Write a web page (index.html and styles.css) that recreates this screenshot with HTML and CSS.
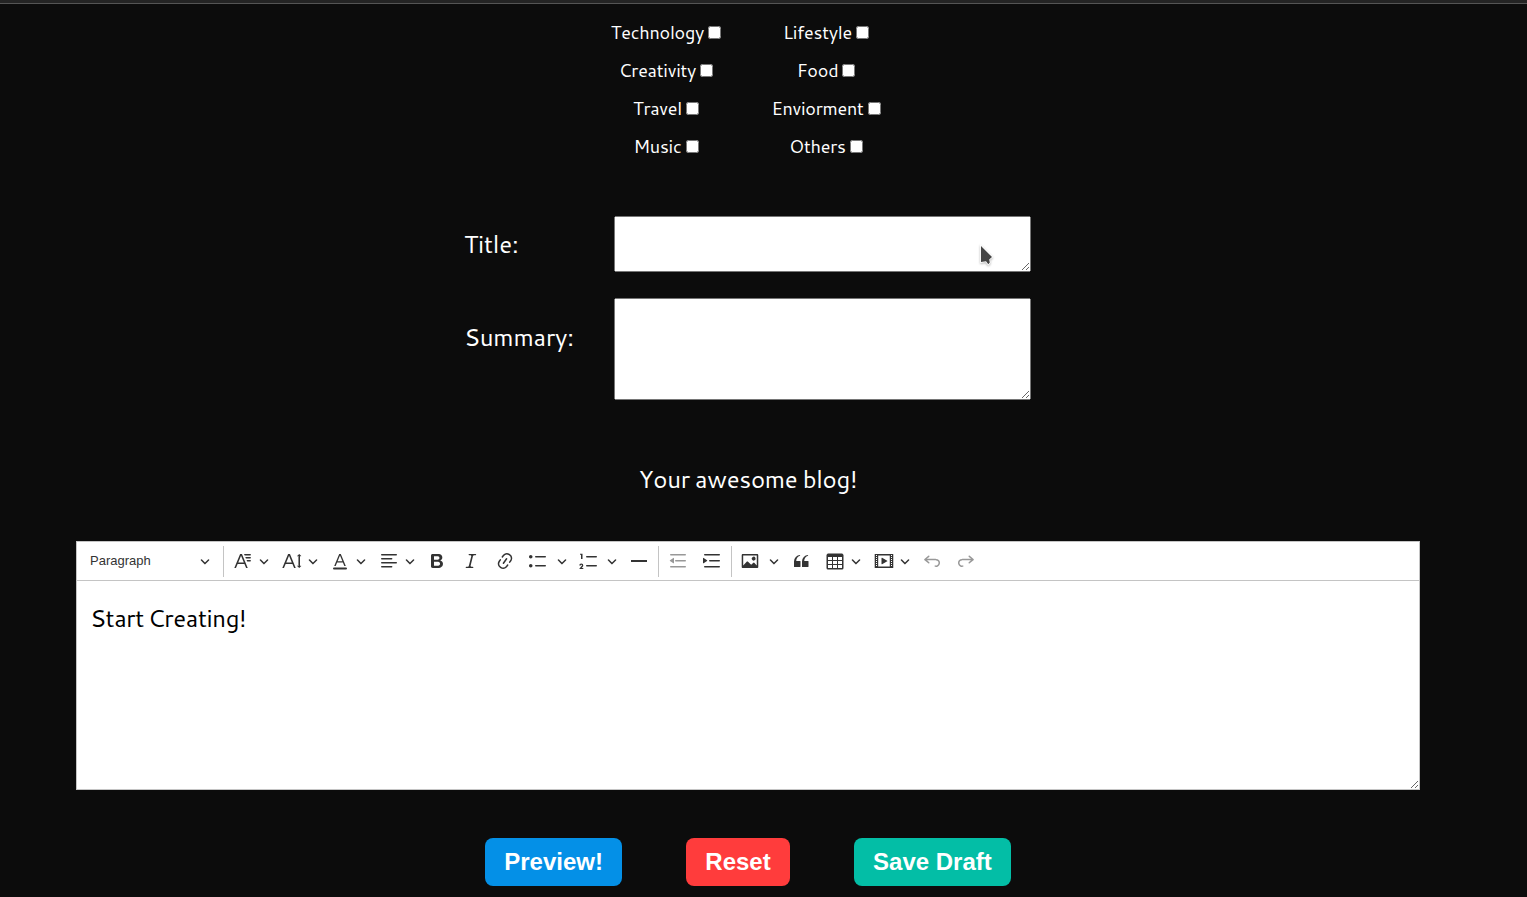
FILE: index.html
```html
<!DOCTYPE html>
<html lang="en">
<head>
<meta charset="utf-8">
<title>Create blog</title>
<link rel="stylesheet" href="styles.css">
</head>
<body>
<svg class="sprite" aria-hidden="true">
  <symbol id="arrow" viewBox="0 0 10 10"><path d="M.941 4.523a.75.75 0 1 1 1.06-1.06l3.006 3.005 3.005-3.005a.75.75 0 1 1 1.06 1.06l-3.549 3.55a.75.75 0 0 1-1.168-.136L.941 4.523z"/></symbol>
</svg>
<div class="topbar"></div>
<main class="page">
  <section class="categories">
    <div class="category-col">
      <label>Technology<input type="checkbox"></label>
      <label>Creativity<input type="checkbox"></label>
      <label>Travel<input type="checkbox"></label>
      <label>Music<input type="checkbox"></label>
    </div>
    <div class="category-col">
      <label>Lifestyle<input type="checkbox"></label>
      <label>Food<input type="checkbox"></label>
      <label>Enviorment<input type="checkbox"></label>
      <label>Others<input type="checkbox"></label>
    </div>
  </section>
  <section class="fields">
    <div class="field title-field">
      <label for="title">Title:</label>
      <textarea id="title"></textarea>
      <svg class="pointer" viewBox="0 0 16 24"><path d="M2 2 V18 L7 17.2 L9.3 20.2 L10.8 18.5 L10.2 15.4 L13 13 Z" fill="#444" stroke="#fff" stroke-width="1.6" paint-order="stroke"/></svg>
    </div>
    <div class="field summary-field">
      <label for="summary">Summary:</label>
      <textarea id="summary"></textarea>
    </div>
  </section>
  <h2 class="heading">Your awesome blog!</h2>
  <section class="editor">
    <div class="toolbar">
      <div class="style-select"><span>Paragraph</span><svg class="arrow"><use href="#arrow"/></svg></div>
      <i class="sep"></i>
      <div class="drop"><svg class="icon" viewBox="0 0 20 20"><path d="M11.03 3h6.149a.75.75 0 1 1 0 1.5h-5.514L11.03 3zm1.27 3h4.879a.75.75 0 1 1 0 1.5h-4.244L12.3 6zm1.27 3h3.609a.75.75 0 1 1 0 1.5h-2.973L13.57 9zm-2.754 2.5L8.038 4.785 5.261 11.5h5.555zm.62 1.5H4.641l-1.666 4.028H1.312l5.789-14h1.875l5.789 14h-1.663L11.436 13z"/></svg><svg class="arrow"><use href="#arrow"/></svg></div>
      <div class="drop"><svg class="icon" viewBox="0 0 20 20"><path d="M9.816 11.5 7.038 4.785 4.261 11.5h5.555zm.62 1.5H3.641l-1.666 4.028H.312l5.789-14h1.875l5.789 14h-1.663L10.436 13zm7.55 2.279.779-.779.53.53-2.079 2.079-2.079-2.079.53-.53.779.779V4.72l-.779.779-.53-.53 2.079-2.079 2.079 2.079-.53.53-.779-.779z"/></svg><svg class="arrow"><use href="#arrow"/></svg></div>
      <div class="drop"><svg class="icon" viewBox="0 0 20 20"><path d="M12.4 10.3 10 4.5l-2.4 5.8h4.8zm.5 1.2H7.1L5.7 15H4.2l5-12h1.6l5 12h-1.5L12.9 11.5zm3.1 7H4a1 1 0 0 1 0-2h12a1 1 0 0 1 0 2z"/></svg><svg class="arrow"><use href="#arrow"/></svg></div>
      <div class="drop"><svg class="icon" viewBox="0 0 20 20"><path class="line" d="M2.75 3.75h14.5M2.75 7.75h9.9M2.75 11.75h14.5M2.75 15.75h9.9"/></svg><svg class="arrow"><use href="#arrow"/></svg></div>
      <div class="tool"><svg class="icon" viewBox="0 0 20 20"><path d="M10.187 17H5.773c-.637 0-1.092-.138-1.364-.415-.273-.277-.409-.718-.409-1.323V4.738c0-.617.14-1.062.419-1.332.279-.27.73-.406 1.354-.406h4.68c.69 0 1.288.041 1.793.124.506.083.96.242 1.36.478.341.197.644.447.906.75a3.262 3.262 0 0 1 .808 2.162c0 1.401-.722 2.426-2.167 3.075C15.05 10.175 16 11.315 16 13.01a3.756 3.756 0 0 1-2.296 3.504 6.1 6.1 0 0 1-1.517.377c-.571.073-1.238.11-2 .11zm-.217-6.217H7v4.087h3.069c1.977 0 2.965-.69 2.965-2.072 0-.707-.256-1.22-.768-1.537-.512-.319-1.277-.478-2.296-.478zM7 5.13v3.619h2.606c.729 0 1.292-.067 1.69-.2a1.6 1.6 0 0 0 .91-.765c.165-.267.247-.566.247-.897 0-.707-.26-1.176-.778-1.409-.519-.232-1.31-.348-2.375-.348H7z"/></svg></div>
      <div class="tool"><svg class="icon" viewBox="0 0 20 20"><path d="m9.586 14.633.021.004c-.036.335.095.655.393.962.082.083.173.15.274.201h1.474a.6.6 0 1 1 0 1.2H5.304a.6.6 0 0 1 0-1.2h1.15c.474-.07.809-.182 1.005-.334.157-.122.291-.32.404-.597l2.416-9.55a1.053 1.053 0 0 0-.281-.823 1.12 1.12 0 0 0-.442-.296H8.15a.6.6 0 0 1 0-1.2h6.443a.6.6 0 1 1 0 1.2h-1.195c-.376.056-.65.155-.823.296-.215.175-.423.439-.623.79l-2.366 9.347z"/></svg></div>
      <div class="tool"><svg class="icon" viewBox="0 0 20 20"><path d="m11.077 15 .991-1.416a.75.75 0 1 1 1.229.86l-1.148 1.64a.748.748 0 0 1-.217.206 5.251 5.251 0 0 1-8.503-5.955.741.741 0 0 1 .12-.274l1.147-1.639a.75.75 0 1 1 1.228.86L4.933 10.7l.006.003a3.75 3.75 0 0 0 6.132 4.294l.006.004zm5.494-5.335a.748.748 0 0 1-.12.274l-1.147 1.639a.75.75 0 1 1-1.228-.86l.86-1.23a3.75 3.75 0 0 0-6.144-4.301l-.86 1.229a.75.75 0 0 1-1.229-.86l1.148-1.64a.748.748 0 0 1 .217-.206 5.251 5.251 0 0 1 8.503 5.955zm-4.563-2.532a.75.75 0 0 1 .184 1.045l-3.155 4.505a.75.75 0 1 1-1.229-.86l3.155-4.506a.75.75 0 0 1 1.045-.184z"/></svg></div>
      <div class="split"><svg class="icon" viewBox="0 0 20 20"><path d="M7 5.75c0 .414.336.75.75.75h9.5a.75.75 0 1 0 0-1.5h-9.5a.75.75 0 0 0-.75.75zm-6 0C1 4.784 1.777 4 2.75 4c.966 0 1.75.777 1.75 1.75 0 .966-.777 1.75-1.75 1.75C1.784 7.5 1 6.723 1 5.75zm6 9c0 .414.336.75.75.75h9.5a.75.75 0 1 0 0-1.5h-9.5a.75.75 0 0 0-.75.75zm-6 0c0-.966.777-1.75 1.75-1.75.966 0 1.75.777 1.75 1.75 0 .966-.777 1.75-1.75 1.75-.966 0-1.75-.777-1.75-1.75z"/></svg><svg class="arrow"><use href="#arrow"/></svg></div>
      <div class="split numbered"><svg class="icon" viewBox="0 0 20 20"><path d="M7 5.75c0 .414.336.75.75.75h9.5a.75.75 0 1 0 0-1.5h-9.5a.75.75 0 0 0-.75.75zM3.5 3v5H2V3.7H1v-1h2.5V3zM.343 17.857l2.59-3.257H2.92a.6.6 0 1 0-1.04 0H.302a2 2 0 1 1 3.995 0h-.001c-.048.405-.16.734-.333.988-.175.254-.59.692-1.244 1.312H4.3v1h-4l.043-.043zM7 14.75a.75.75 0 0 1 .75-.75h9.5a.75.75 0 1 1 0 1.5h-9.5a.75.75 0 0 1-.75-.75z"/></svg><svg class="arrow"><use href="#arrow"/></svg></div>
      <div class="tool"><svg class="icon" viewBox="0 0 20 20"><path d="M2 9h16v2H2z"/></svg></div>
      <i class="sep"></i>
      <div class="tool off"><svg class="icon" viewBox="0 0 20 20"><path d="M2 3.75c0 .414.336.75.75.75h14.5a.75.75 0 1 0 0-1.5H2.75a.75.75 0 0 0-.75.75zm5 6c0 .414.336.75.75.75h9.5a.75.75 0 1 0 0-1.5h-9.5a.75.75 0 0 0-.75.75zM2.75 16.5h14.5a.75.75 0 1 0 0-1.5H2.75a.75.75 0 1 0 0 1.5zM5.368 6.95 1.98 9.358a.4.4 0 0 0 .013.661l3.39 2.207A.4.4 0 0 0 6 11.892V7.275a.4.4 0 0 0-.632-.326z"/></svg></div>
      <div class="tool"><svg class="icon" viewBox="0 0 20 20"><path d="M2 3.75c0 .414.336.75.75.75h14.5a.75.75 0 1 0 0-1.5H2.75a.75.75 0 0 0-.75.75zm5 6c0 .414.336.75.75.75h9.5a.75.75 0 1 0 0-1.5h-9.5a.75.75 0 0 0-.75.75zM2.75 16.5h14.5a.75.75 0 1 0 0-1.5H2.75a.75.75 0 1 0 0 1.5zM1.632 6.95 5.02 9.358a.4.4 0 0 1-.013.661l-3.39 2.207A.4.4 0 0 1 1 11.892V7.275a.4.4 0 0 1 .632-.326z"/></svg></div>
      <i class="sep"></i>
      <div class="split"><svg class="icon" viewBox="0 0 20 20"><path d="M6.91 10.54c.26-.23.64-.21.88.03l3.36 3.14 2.23-2.06a.64.64 0 0 1 .87 0l2.52 2.97V4.5H3.2v10.12l3.71-4.08zm10.27-7.51c.6 0 1.09.47 1.09 1.05v11.84c0 .59-.49 1.06-1.09 1.06H2.79c-.6 0-1.09-.47-1.09-1.06V4.08c0-.58.49-1.05 1.1-1.05h14.38zm-5.22 5.56a1.96 1.96 0 1 1 3.4-1.96 1.96 1.96 0 0 1-3.4 1.96z"/></svg><svg class="arrow"><use href="#arrow"/></svg></div>
      <div class="tool"><svg class="icon" viewBox="0 0 20 20"><path d="M3 10.423a6.5 6.5 0 0 1 6.056-6.408l.038.67C6.448 5.423 5.354 7.663 5.22 10H9c.552 0 .5.432.5.986v4.511c0 .554-.448.503-1 .503h-5c-.552 0-.5-.449-.5-1.003v-4.574zm8 0a6.5 6.5 0 0 1 6.056-6.408l.038.67c-2.646.739-3.74 2.979-3.873 5.315H17c.552 0 .5.432.5.986v4.511c0 .554-.448.503-1 .503h-5c-.552 0-.5-.449-.5-1.003v-4.574z"/></svg></div>
      <div class="drop"><svg class="icon" viewBox="0 0 20 20"><path d="M3 6v3h4V6H3zm0 4v3h4v-3H3zm0 4v3h4v-3H3zm5 3h4v-3H8v3zm5 0h4v-3h-4v3zm4-4v-3h-4v3h4zm0-4V6h-4v3h4zm1.5 8a1.5 1.5 0 0 1-1.5 1.5H3A1.5 1.5 0 0 1 1.5 17V4c.222-.863 1.068-1.5 2-1.5h13c.932 0 1.778.637 2 1.5v13zM12 13v-3H8v3h4zm0-4V6H8v3h4z"/></svg><svg class="arrow"><use href="#arrow"/></svg></div>
      <div class="drop"><svg class="icon" viewBox="0 0 20 20"><path fill-rule="evenodd" d="M18.68 3.03c.6 0 .59-.03.59.55v12.84c0 .59.01.56-.59.56H1.29c-.6 0-.59.03-.59-.56V3.58c0-.58-.01-.55.6-.55h17.38zM15.77 15.4V4.6H4.2v10.8h11.57zM2 4v1h1V4H2zm0 2v1h1V6H2zm0 2v1h1V8H2zm0 2v1h1v-1H2zm0 2v1h1v-1H2zm0 2v1h1v-1H2zM17 4v1h1V4h-1zm0 2v1h1V6h-1zm0 2v1h1V8h-1zm0 2v1h1v-1h-1zm0 2v1h1v-1h-1zm0 2v1h1v-1h-1zM7.5 7.177a.4.4 0 0 1 .593-.351l5.133 2.824a.4.4 0 0 1 0 .7l-5.133 2.824a.4.4 0 0 1-.593-.35V7.176z"/></svg><svg class="arrow"><use href="#arrow"/></svg></div>
      <div class="tool off"><svg class="icon" viewBox="0 0 20 20"><path d="m5.042 9.367 2.189 1.837a.75.75 0 0 1-.965 1.149l-3.788-3.18a.747.747 0 0 1-.21-.284.75.75 0 0 1 .17-.945L6.23 4.762a.75.75 0 1 1 .964 1.15L4.863 7.866h8.917A.75.75 0 0 1 14 7.9a4 4 0 1 1-1.477 7.718l.344-1.489a2.5 2.5 0 1 0 1.094-4.73l.008-.032H5.042z"/></svg></div>
      <div class="tool off"><svg class="icon mirrored" viewBox="0 0 20 20"><path d="m5.042 9.367 2.189 1.837a.75.75 0 0 1-.965 1.149l-3.788-3.18a.747.747 0 0 1-.21-.284.75.75 0 0 1 .17-.945L6.23 4.762a.75.75 0 1 1 .964 1.15L4.863 7.866h8.917A.75.75 0 0 1 14 7.9a4 4 0 1 1-1.477 7.718l.344-1.489a2.5 2.5 0 1 0 1.094-4.73l.008-.032H5.042z"/></svg></div>
    </div>
    <div class="content"><p>Start Creating!</p></div>
  </section>
  <div class="actions">
    <button class="btn preview">Preview!</button>
    <button class="btn reset">Reset</button>
    <button class="btn save">Save Draft</button>
  </div>
</main>
</body>
</html>
```
FILE: styles.css
```css
* { box-sizing: border-box; }
body {
  margin: 0;
  height: 897px;
  overflow: hidden;
  background: #0c0c0c;
  color: #fff;
  font-family: Cantarell, "Noto Sans", sans-serif;
}
.sprite { display: none; }
.topbar { height: 4px; background: #242424; border-bottom: 1px solid #555; }
.page { width: 1496px; display: flex; flex-direction: column; align-items: center; }

.categories { display: grid; grid-template-columns: 160px 160px; margin: 9px 4px 0 0; }
.category-col { display: flex; flex-direction: column; align-items: center; }
.category-col label {
  height: 38px;
  display: flex;
  align-items: center;
  gap: 4px;
  font-size: 18px;
  letter-spacing: -0.25px;
}
.category-col input { margin: 0; width: 13px; height: 13px; }

.fields { display: flex; flex-direction: column; gap: 26px; width: 567px; margin: 51px 1px 0 0; }
.field { position: relative; display: flex; justify-content: space-between; }
.field label { font-size: 24px; line-height: 32px; letter-spacing: -0.2px; }
.title-field label { padding-top: 12px; }
.summary-field label { padding-top: 23px; }
.field textarea { display: block; width: 417px; margin: 0; }
.title-field textarea { height: 56px; }
.summary-field textarea { height: 102px; }
.pointer { position: absolute; left: 515px; top: 28px; width: 16px; height: 24px; filter: drop-shadow(0 1px 1px rgba(0, 0, 0, .3)); }

.heading { margin: 63px 0 0; font-size: 24px; font-weight: 400; line-height: 32px; letter-spacing: -0.3px; word-spacing: -1px; }

.editor { width: 1344px; height: 249px; margin-top: 46px; display: flex; flex-direction: column; background: #fff; border: 1px solid #c4c4c4; color: #000; resize: vertical; overflow: hidden; }
.toolbar { height: 39px; flex: none; display: flex; align-items: center; border-bottom: 1px solid #c4c4c4; color: #333; }
.style-select { width: 146px; padding: 0 13px; display: flex; align-items: center; justify-content: space-between; font: 13px "Liberation Sans", Arial, sans-serif; }
.style-select span { padding-bottom: 2px; }
.sep { width: 1px; height: 31px; margin: 0 2px 0 0; background: #c4c4c4; flex: none; }
.tool { width: 34px; display: flex; justify-content: center; flex: none; }
.tool + .sep { margin-left: 2px; }
.drop { width: 48.5px; padding-left: 7px; display: flex; align-items: center; gap: 6px; flex: none; }
.split { width: 50px; padding-left: 6px; display: flex; align-items: center; gap: 9px; flex: none; }
.numbered { padding-left: 7px; gap: 8px; }
.icon { width: 20px; height: 20px; fill: currentColor; flex: none; }
.arrow { width: 10px; height: 10px; fill: currentColor; flex: none; }
.line { fill: none; stroke: currentColor; stroke-width: 1.5; stroke-linecap: round; }
.off { opacity: .5; }
.mirrored { transform: scaleX(-1); }
.content { padding: 0 13px; }
.content p { margin: 21px 0 0; font-size: 24px; line-height: 32px; letter-spacing: -0.4px; word-spacing: -2.5px; }

.actions { display: flex; gap: 64px; margin-top: 48px; }
.btn { height: 48px; padding: 0 19.2px; border: 0; border-radius: 8px; color: #fff; font: bold 24px "Liberation Sans", Arial, sans-serif; }
.preview { background: #0490e7; }
.reset { background: #ff3c3c; }
.save { background: #03bea6; }
```
